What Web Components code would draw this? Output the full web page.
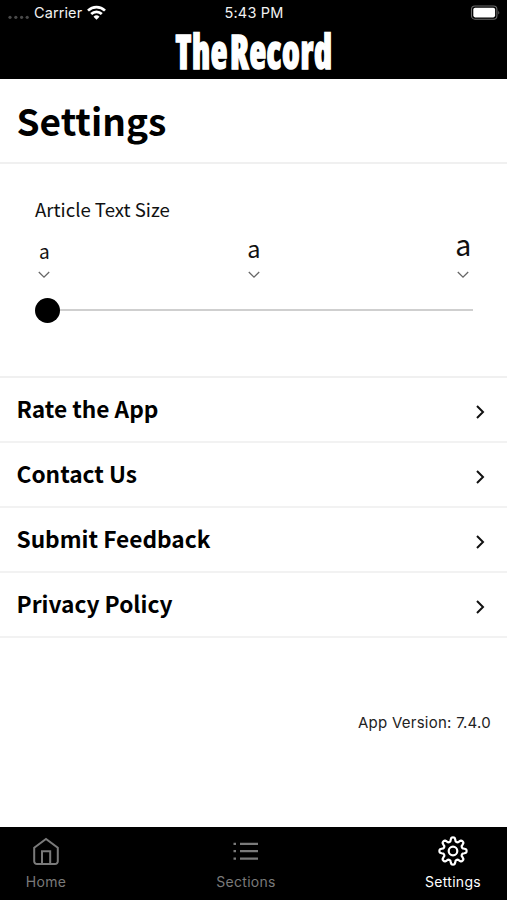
<!DOCTYPE html>
<html lang="en">
<head>
<meta charset="utf-8">
<title>Settings</title>
<style>
    body
    {
        margin      : 0;
        background  : #ffffff;
    }
</style>
</head>
<body>
<settings-app></settings-app>

<script>
class statusBar extends HTMLElement
{
    constructor()
    {
        super();
        this.shadowDOM = this.attachShadow({mode:"open"});
    }

    connectedCallback()
    {
        this.render();
    }

    render()
    {
        this.shadowDOM.innerHTML =
        `
        <style>
            :host
            {
                display               : grid;
                grid-template-columns : 1fr auto 1fr;
                align-items           : center;
                height                : 26px;
                padding               : 0 7px 0 8px;
                box-sizing            : border-box;
                color                 : #f2f2f2;
                font                  : 14.5px/26px Inter, "Liberation Sans", sans-serif;
            }

            .carrier
            {
                display        : flex;
                align-items    : center;
                letter-spacing : 0.1px;
            }

            .dots
            {
                margin-right : 5px;
            }

            .wifi
            {
                margin-left : 5px;
            }

            .battery
            {
                justify-self : end;
            }

            svg
            {
                display : block;
            }

            .time
            {
                letter-spacing : 0.2px;
            }
        </style>

        <div class="carrier">
            <svg class="dots" width="21" height="26" fill="#4a4a4a">
                <circle cx="2" cy="17.3" r="1.6"/>
                <circle cx="7.8" cy="17.3" r="1.6"/>
                <circle cx="13.6" cy="17.3" r="1.6"/>
                <circle cx="19.2" cy="17.3" r="1.6"/>
            </svg>
            <span>Carrier</span>
            <svg class="wifi" width="19" height="26" viewBox="0 0 19 26" fill="none" stroke="#ffffff" stroke-width="2.7">
                <path d="M1 10.6a12.2 12.2 0 0 1 17 0"/>
                <path d="M4.2 14a7.6 7.6 0 0 1 10.6 0"/>
                <path d="M9.5 19.8l-3-3.1a4.3 4.3 0 0 1 6 0z" fill="#ffffff" stroke="none"/>
            </svg>
        </div>
        <span class="time">5:43 PM</span>
        <svg class="battery" width="30" height="26" viewBox="0 0 30 26">
            <rect x="1.5" y="6" width="25.4" height="13.2" rx="3.4" fill="none" stroke="#6b6b6b" stroke-width="1.1"/>
            <rect x="3.3" y="7.8" width="21.8" height="9.6" rx="1.8" fill="#ffffff"/>
            <path d="M28.4 10.6q1.6 2 0 4z" fill="#777777"/>
        </svg>
        `
    }
}

class brandLogo extends HTMLElement
{
    constructor()
    {
        super();
        this.shadowDOM = this.attachShadow({mode:"open"});
    }

    connectedCallback()
    {
        this.render();
    }

    render()
    {
        this.shadowDOM.innerHTML =
        `
        <style>
            :host
            {
                display         : flex;
                justify-content : center;
                height          : 53px;
            }

            svg
            {
                overflow : visible;
            }

            text
            {
                font            : 800 47px "Open Sans", "Liberation Sans", sans-serif;
                font-stretch    : 75%;
                letter-spacing  : 0.8px;
                word-spacing    : -6px;
                fill            : #ffffff;
                stroke          : #ffffff;
                stroke-width    : 1.5;
                stroke-linejoin : miter;
            }
        </style>

        <svg width="160" height="53">
            <text x="1.5" y="43" textLength="157" lengthAdjust="spacingAndGlyphs">The Record</text>
        </svg>
        `
    }
}

class textSize extends HTMLElement
{
    constructor()
    {
        super();
        this.shadowDOM = this.attachShadow({mode:"open"});
    }

    connectedCallback()
    {
        this.render();
    }

    render()
    {
        const arrow = `<svg width="12" height="8" fill="none" stroke="#666666" stroke-width="1.3"><path d="M0.8 1l5.2 5.2L11.2 1"/></svg>`;

        this.shadowDOM.innerHTML =
        `
        <style>
            :host
            {
                display    : block;
                height     : 212px;
                padding    : 31px 34px 0 35px;
                box-sizing : border-box;
                color      : #111111;
            }

            .label
            {
                font-size   : 18.6px;
                line-height : 28px;
            }

            .sizes
            {
                display         : flex;
                justify-content : space-between;
                align-items     : flex-end;
                height          : 56px;
                padding         : 0 3.2px 0 2.8px;
            }

            .mark
            {
                display        : flex;
                flex-direction : column;
                align-items    : center;
                width          : 13px;
            }

            .small  { font-size : 19px; line-height : 41px; }
            .medium { font-size : 23.5px; line-height : 46px; }
            .large  { font-size : 28.5px; line-height : 55px; }

            .track
            {
                display     : flex;
                align-items : center;
                height      : 26px;
                margin-top  : 18px;
            }

            .thumb
            {
                width         : 25px;
                height        : 25px;
                border-radius : 50%;
                background    : #000000;
            }

            .rail
            {
                flex       : 1;
                height     : 2px;
                background : #cfcfcf;
            }
        </style>

        <div class="label"><slot></slot></div>
        <div class="sizes">
            <div class="mark"><span class="small">a</span>${arrow}</div>
            <div class="mark"><span class="medium">a</span>${arrow}</div>
            <div class="mark"><span class="large">a</span>${arrow}</div>
        </div>
        <div class="track"><div class="thumb"></div><div class="rail"></div></div>
        `
    }
}

class menuRow extends HTMLElement
{
    constructor()
    {
        super();
        this.shadowDOM = this.attachShadow({mode:"open"});
    }

    connectedCallback()
    {
        this.render();
    }

    render()
    {
        this.shadowDOM.innerHTML =
        `
        <style>
            :host
            {
                display         : flex;
                justify-content : space-between;
                align-items     : flex-start;
                height          : 65px;
                padding         : 0 21.5px 0 16.5px;
                box-sizing      : border-box;
                border-bottom   : 2px solid #f2f2f2;
                font-size       : 22.7px;
                font-weight     : bold;
                line-height     : 62px;
            }

            svg
            {
                margin-top : 25.5px;
            }
        </style>

        <span><slot></slot></span>
        <svg width="11" height="16" fill="none" stroke="#111111" stroke-width="2"><path d="M2 2l6 6-6 6"/></svg>
        `
    }
}

class tabItem extends HTMLElement
{
    constructor()
    {
        super();
        this.shadowDOM = this.attachShadow({mode:"open"});
    }

    connectedCallback()
    {
        this.render();
    }

    render()
    {
        this.shadowDOM.innerHTML =
        `
        <style>
            :host
            {
                display        : flex;
                flex-direction : column;
                align-items    : center;
                width          : 92px;
                padding-top    : 7px;
                color          : #7a7a7a;
                font           : 14px/20px Inter, "Liberation Sans", sans-serif;
                letter-spacing : 0.3px;
            }

            :host([active])
            {
                color : #ffffff;
            }

            .text
            {
                margin-top : 4px;
            }
        </style>

        <slot name="icon"></slot>
        <span class="text"><slot></slot></span>
        `
    }
}

class settingsApp extends HTMLElement
{
    constructor()
    {
        super();
        this.shadowDOM = this.attachShadow({mode:"open"});
    }

    connectedCallback()
    {
        this.render();
    }

    // eight rounded teeth around the centre of a 34px box
    gearPath()
    {
        const points = [];
        for (let i = 0; i < 96; i++)
        {
            const angle = i / 96 * Math.PI * 2;
            const wave = Math.cos(8 * angle);
            const r = 11.6 + 2.1 * Math.tanh(1.8 * wave);
            points.push(`${(17 + r * Math.sin(angle)).toFixed(2)} ${(17 - r * Math.cos(angle)).toFixed(2)}`);
        }
        return `M${points.join("L")}Z`;
    }

    render()
    {
        this.shadowDOM.innerHTML =
        `
        <style>
            :host
            {
                display        : flex;
                flex-direction : column;
                height         : 900px;
                color          : #000000;
                font-family    : "Noto Sans CJK SC", "Noto Sans", sans-serif;
            }

            header
            {
                height     : 79px;
                background : #000000;
            }

            h1
            {
                height        : 85px;
                margin        : 0;
                padding-left  : 16.5px;
                box-sizing    : border-box;
                border-bottom : 2px solid #f0f0f0;
                font-size     : 37px;
                line-height   : 83px;
            }

            .menu
            {
                border-top : 2px solid #f0f0f0;
            }

            .version
            {
                margin-top     : 74px;
                padding-right  : 16px;
                text-align     : right;
                color          : #222222;
                font           : 15px/22px Inter, "Liberation Sans", sans-serif;
                letter-spacing : 0.26px;
            }

            nav
            {
                display       : flex;
                height        : 73.5px;
                margin-top    : auto;
                padding-right : 8px;
                background    : #000000;
            }

            .last
            {
                margin-left : auto;
            }

            .middle
            {
                margin-left : 108px;
            }
        </style>

        <header>
            <status-bar></status-bar>
            <brand-logo></brand-logo>
        </header>
        <h1>Settings</h1>
        <text-size>Article Text Size</text-size>
        <div class="menu">
            <menu-row>Rate the App</menu-row>
            <menu-row>Contact Us</menu-row>
            <menu-row>Submit Feedback</menu-row>
            <menu-row>Privacy Policy</menu-row>
        </div>
        <div class="version">App Version: 7.4.0</div>
        <nav>
            <tab-item>
                <svg slot="icon" width="34" height="34" fill="none" stroke="#7a7a7a" stroke-width="2">
                    <path d="M5.2 13.7L17 5l11.8 8.7v13.6a2.8 2.8 0 0 1-2.8 2.8H8a2.8 2.8 0 0 1-2.8-2.8z"/>
                    <path d="M13 29.8V17.3h8.2v12.5"/>
                </svg>
                Home
            </tab-item>
            <tab-item class="middle">
                <svg slot="icon" width="34" height="34" fill="none" stroke="#7a7a7a" stroke-width="2.3">
                    <path d="M4.5 9.8h2.5M4.5 17.2h2.5M4.5 24.6h2.5M11 9.8H29M11 17.2H29M11 24.6H29"/>
                </svg>
                Sections
            </tab-item>
            <tab-item active class="last">
                <svg slot="icon" width="34" height="34" fill="none" stroke="#ffffff" stroke-width="2.2" stroke-linejoin="round">
                    <path d="${this.gearPath()}"/>
                    <circle cx="17" cy="17" r="4.3"/>
                </svg>
                Settings
            </tab-item>
        </nav>
        `
    }
}

customElements.get('status-bar') || customElements.define('status-bar',statusBar);
customElements.get('brand-logo') || customElements.define('brand-logo',brandLogo);
customElements.get('text-size') || customElements.define('text-size',textSize);
customElements.get('menu-row') || customElements.define('menu-row',menuRow);
customElements.get('tab-item') || customElements.define('tab-item',tabItem);
customElements.get('settings-app') || customElements.define('settings-app',settingsApp);
</script>
</body>
</html>
